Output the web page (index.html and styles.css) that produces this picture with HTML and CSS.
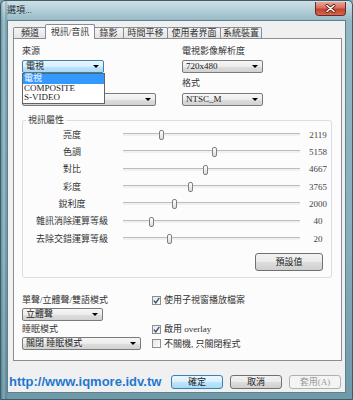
FILE: index.html
```html
<!DOCTYPE html>
<html>
<head>
<meta charset="utf-8">
<link rel="stylesheet" href="styles.css">
</head>
<body>
<div class="window">
  <div class="titlebar">
    <span class="title">選項...</span>
    <div class="close">
      <svg width="11" height="9" viewBox="0 0 11 9"><path d="M2 1.5 L9 7.5 M9 1.5 L2 7.5" stroke="#5a1a10" stroke-width="3" stroke-linecap="round"/><path d="M2 1.5 L9 7.5 M9 1.5 L2 7.5" stroke="#ffffff" stroke-width="1.6" stroke-linecap="round"/></svg>
    </div>
  </div>
  <div class="frame">
    <div class="client">
      <div class="tabs">
        <div class="tab w-a">頻道</div>
        <div class="tab active w-b">視訊/音訊</div>
        <div class="tab w-c">錄影</div>
        <div class="tab w-d">時間平移</div>
        <div class="tab w-e">使用者界面</div>
        <div class="tab w-f">系統裝置</div>
      </div>
      <div class="panel">
        <div class="top">
          <div class="col">
            <div class="label">來源</div>
            <div class="combo-wrap">
              <div class="select focus sel-source">電視<span class="arrow"></span></div>
              <ul class="popup">
                <li class="hl">電視</li>
                <li>COMPOSITE</li>
                <li>S-VIDEO</li>
              </ul>
            </div>
            <div class="label gap">&nbsp;</div>
            <div class="select gap sel-wide"><span class="arrow"></span></div>
          </div>
          <div class="col">
            <div class="label">電視影像解析度</div>
            <div class="select sel-res">720x480<span class="arrow"></span></div>
            <div class="label gap">格式</div>
            <div class="select gap sel-res">NTSC_M<span class="arrow"></span></div>
          </div>
        </div>
        <fieldset class="group">
          <legend>視訊屬性</legend>
          <div class="sliders">
            <div class="s-label">亮度</div>
            <div class="track"><span class="thumb" style="left:22.0%"></span></div>
            <div class="s-value">2119</div>
            <div class="s-label">色調</div>
            <div class="track"><span class="thumb" style="left:52.0%"></span></div>
            <div class="s-value">5158</div>
            <div class="s-label">對比</div>
            <div class="track"><span class="thumb" style="left:46.9%"></span></div>
            <div class="s-value">4667</div>
            <div class="s-label">彩度</div>
            <div class="track"><span class="thumb" style="left:38.4%"></span></div>
            <div class="s-value">3765</div>
            <div class="s-label">銳利度</div>
            <div class="track"><span class="thumb" style="left:29.4%"></span></div>
            <div class="s-value">2000</div>
            <div class="s-label">雜訊消除運算等級</div>
            <div class="track"><span class="thumb" style="left:16.4%"></span></div>
            <div class="s-value">40</div>
            <div class="s-label">去除交錯運算等級</div>
            <div class="track"><span class="thumb" style="left:26.6%"></span></div>
            <div class="s-value">20</div>
          </div>
          <div class="group-actions"><div class="btn btn-default">預設值</div></div>
        </fieldset>
        <div class="lower">
          <div class="label">單聲/立體聲/雙語模式</div>
          <div class="check"><span class="box on"><svg width="7" height="7" viewBox="0 0 7 7"><path d="M0.8 3.6 L2.8 5.8 L6.3 0.8" fill="none" stroke="#3d4f7c" stroke-width="1.4"/></svg></span>使用子視窗播放檔案</div>
          <div class="select sel-stereo">立體聲<span class="arrow"></span></div>
          <div></div>
          <div class="label">睡眠模式</div>
          <div class="check"><span class="box on"><svg width="7" height="7" viewBox="0 0 7 7"><path d="M0.8 3.6 L2.8 5.8 L6.3 0.8" fill="none" stroke="#3d4f7c" stroke-width="1.4"/></svg></span>啟用 overlay</div>
          <div class="select sel-sleep">關閉 睡眠模式<span class="arrow"></span></div>
          <div class="check"><span class="box"></span>不關機, 只關閉程式</div>
        </div>
      </div>
      <div class="footer">
        <span class="url">http://www.iqmore.idv.tw</span>
        <div class="buttons">
          <div class="btn btn-ok">確定</div>
          <div class="btn">取消</div>
          <div class="btn disabled">套用(A)</div>
        </div>
      </div>
    </div>
  </div>
</div>
</body>
</html>
```

FILE: styles.css
```css
html, body {
  margin: 0;
  padding: 0;
}

body {
  width: 353px;
  height: 400px;
  overflow: hidden;
  font-family: "Liberation Serif", "Noto Sans CJK TC", serif;
  font-size: 9px;
  color: #333;
  background: #7fa6b4;
}

.window {
  height: 400px;
  box-sizing: border-box;
  display: flex;
  flex-direction: column;
  border: 1px solid #3f5d69;
  border-radius: 5px 5px 0 0;
  background:
    linear-gradient(90deg, rgba(40, 90, 105, 0.35) 0, rgba(255, 255, 255, 0.15) 3px, rgba(40, 90, 105, 0.3) 5px, rgba(0, 0, 0, 0) 7px),
    linear-gradient(180deg, #cfe0e6 0, #b2cdd6 10px, #93b8c5 20px, #86aebc 60%, #6f9aaa 100%);
}

.titlebar {
  height: 19px;
  display: flex;
  align-items: flex-start;
  padding-left: 6px;
}

.title {
  margin-top: 3px;
  line-height: 12px;
  color: #1c2c33;
}

.close {
  margin-left: auto;
  margin-right: 6px;
  margin-top: 1px;
  width: 31px;
  height: 14px;
  box-sizing: border-box;
  border: 1px solid #6b2b22;
  border-top: none;
  border-radius: 0 0 4px 4px;
  background: linear-gradient(180deg, #e8a697 0, #d7705f 45%, #c4402c 55%, #d36a4f 100%);
  display: flex;
  align-items: center;
  justify-content: center;
}

.frame {
  flex: 1;
  display: flex;
  padding: 0 6px 6px 6px;
}

.client {
  flex: 1;
  display: flex;
  flex-direction: column;
  background: #f0f0f0;
  border: 1px solid #5f7f8c;
}

/* Tabs */
.tabs {
  height: 17px;
  display: flex;
  align-items: flex-end;
  padding-left: 5px;
}

.tab {
  box-sizing: border-box;
  height: 11px;
  line-height: 10px;
  text-align: center;
  border: 1px solid #898c95;
  border-bottom: none;
  border-radius: 2px 2px 0 0;
  margin-left: -1px;
  background: linear-gradient(180deg, #f5f5f5, #e4e4e4);
  color: #333;
}

.tab:first-child {
  margin-left: 0;
}

.tab.active {
  height: 15px;
  margin-bottom: -1px;
  padding-top: 2px;
  line-height: 11px;
  background: #fcfcfc;
  position: relative;
  z-index: 1;
  margin-left: -2px;
  margin-right: -1px;
}

.w-a { width: 34px; }
.w-b { width: 50px; }
.w-c { width: 31px; }
.w-d { width: 45px; }
.w-e { width: 54px; }
.w-f { width: 42px; }

.panel {
  box-sizing: border-box;
  height: 323px;
  margin: 0 3px 0 5px;
  border: 1px solid #898c95;
  background: #fcfcfc;
  padding: 6px 0 0 8px;
}

.label {
  height: 12px;
  line-height: 12px;
  white-space: nowrap;
}

.top {
  display: grid;
  grid-template-columns: 160px auto;
}

.gap {
  margin-top: 4px;
}

.select {
  box-sizing: border-box;
  height: 13px;
  margin-top: 3px;
  border: 1px solid #7a7a7a;
  border-radius: 2px;
  background: linear-gradient(180deg, #f6f6f6 0, #ececec 50%, #dedede 51%, #d2d2d2 100%);
  display: flex;
  align-items: center;
  padding-left: 3px;
  line-height: 11px;
  color: #222;
  white-space: nowrap;
}

.select.gap {
  margin-top: 4px;
}

.select.focus {
  border-color: #3c7fb1;
  background: linear-gradient(180deg, #eaf6fd 0, #d9f0fc 50%, #bee6fd 51%, #a7d9f5 100%);
}

.arrow {
  margin-left: auto;
  margin-right: 4px;
  width: 0;
  height: 0;
  border-left: 3px solid transparent;
  border-right: 3px solid transparent;
  border-top: 3px solid #000;
}

.sel-source { width: 82px; }
.sel-wide { width: 134px; }
.sel-res { width: 81px; }
.sel-stereo { width: 81px; margin-top: 0; }
.sel-sleep { width: 119px; margin-top: 0; }

.combo-wrap {
  position: relative;
}

.popup {
  position: absolute;
  left: 0;
  top: 13px;
  width: 83px;
  box-sizing: border-box;
  margin: 0;
  padding: 0;
  list-style: none;
  background: #fff;
  border: 1px solid #646464;
  z-index: 2;
}

.popup li {
  height: 9.5px;
  line-height: 9.5px;
  padding-left: 1px;
  color: #222;
}

.popup li.hl {
  background: #3399ff;
  color: #fff;
}

/* Group */
.group {
  box-sizing: border-box;
  width: 310px;
  margin: 8px 0 0 0;
  padding: 0 0 6px 0;
  border: 1px solid #d5dfe5;
  border-radius: 3px;
  min-width: 0;
}

.group legend {
  margin-left: 3px;
  padding: 0 2px;
  line-height: 12px;
  height: 12px;
}

.sliders {
  display: grid;
  grid-template-columns: 100px 177px 31px;
  grid-auto-rows: 17.33px;
  align-items: center;
}

.s-label {
  text-align: center;
  padding-right: 2px;
  line-height: 12px;
  white-space: nowrap;
}

.track {
  position: relative;
  height: 2px;
  border-top: 1px solid #bcbcbc;
  background: #f0f0f0;
}

.thumb {
  position: absolute;
  top: 50%;
  width: 5px;
  height: 10px;
  margin-left: -3px;
  transform: translateY(-50%);
  box-sizing: border-box;
  border: 1px solid #808080;
  border-radius: 2px;
  background: linear-gradient(180deg, #ffffff, #dcdcdc);
}

.s-value {
  text-align: center;
  padding-left: 5px;
  line-height: 12px;
  color: #444;
}

.group-actions {
  display: flex;
  justify-content: flex-end;
  padding-right: 8px;
  margin-top: 6px;
}

.btn {
  box-sizing: border-box;
  height: 14px;
  line-height: 12px;
  text-align: center;
  border: 1px solid #707070;
  border-radius: 3px;
  background: linear-gradient(180deg, #f2f2f2 0, #ebebeb 50%, #dddddd 51%, #cfcfcf 100%);
  color: #222;
}

.btn-default {
  width: 68px;
  height: 18px;
  line-height: 16px;
}

/* Lower */
.lower {
  margin-top: 16px;
  display: grid;
  grid-template-columns: 130px auto;
  grid-template-rows: 12px 13px 12px 13px;
  row-gap: 2px;
}

.check {
  display: flex;
  align-items: center;
  line-height: 12px;
  white-space: nowrap;
}

.box {
  box-sizing: border-box;
  width: 9px;
  height: 9px;
  margin-right: 3px;
  border: 1px solid #8e8f8f;
  background: linear-gradient(135deg, #e6e6e6, #fbfbfb);
  display: flex;
  align-items: center;
  justify-content: center;
}

/* Footer */
.footer {
  margin-top: 13px;
  height: 16px;
  display: flex;
  align-items: center;
  padding-left: 1px;
}

.url {
  font-family: "Liberation Sans", sans-serif;
  font-weight: bold;
  font-size: 13px;
  line-height: 16px;
  color: #1e78d2;
}

.buttons {
  margin-left: auto;
  margin-right: 4px;
  display: flex;
  gap: 7px;
}

.buttons .btn {
  width: 52px;
}

.btn-ok {
  border-color: #3c7fb1;
  background: linear-gradient(180deg, #eaf6fd 0, #d9f0fc 50%, #bee6fd 51%, #a7d9f5 100%);
}

.btn.disabled {
  border-color: #adb2b5;
  background: #f4f4f4;
  color: #9a9a9a;
}
```
